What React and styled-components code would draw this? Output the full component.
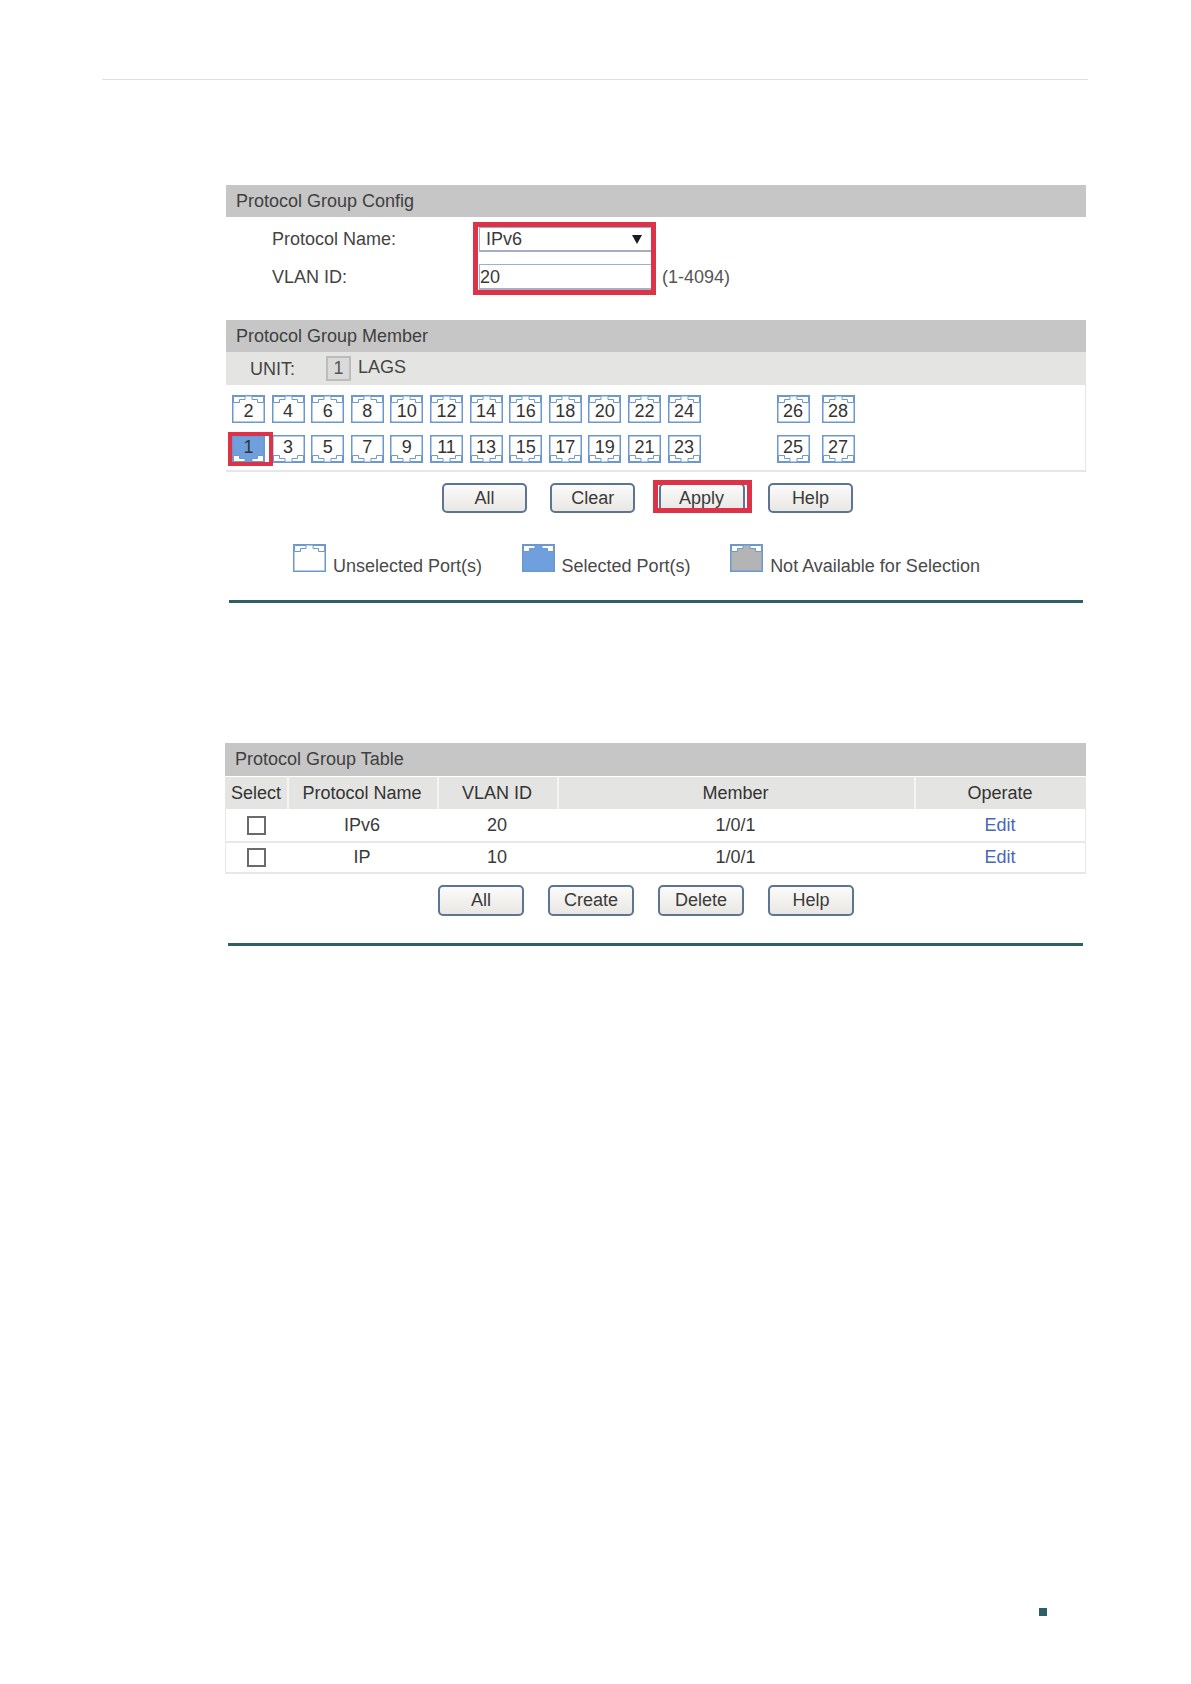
import React from "react";
import styled, { createGlobalStyle } from "styled-components";

const Global = createGlobalStyle`
  body {
    margin: 0;
    background: #fff;
    font-family: "Liberation Sans", Arial, sans-serif;
    font-size: 18px;
    color: #3a3a3a;
  }
`;

const Page = styled.div`
  width: 1191px;
  height: 1684px;
  display: flex;
  flex-direction: column;
  overflow: hidden;
`;

const TopRule = styled.div`
  height: 1px;
  margin: 79px 103px 0 102px;
  background: #e0e0e0;
`;

const Sheet = styled.div`
  width: 860px;
  margin: 105px 0 0 226px;
`;

const TableSheet = styled.div`
  width: 861px;
  margin: 140px 0 0 225px;
`;

const PanelTitle = styled.div`
  height: ${(p) => p.$h || 32}px;
  line-height: 33px;
  padding-left: 10px;
  background: #c6c6c6;
  color: #3f3f3f;
`;

const ConfigForm = styled.div`
  position: relative;
  display: grid;
  grid-template-columns: 253px 173px auto;
  grid-auto-rows: min-content;
  row-gap: 12px;
  align-items: center;
  padding: 10px 0 30px;
`;

const FieldLabel = styled.label`
  padding-left: 46px;
  color: #444;
`;

const SelectBox = styled.div`
  box-sizing: border-box;
  height: 25px;
  display: flex;
  align-items: center;
  justify-content: space-between;
  padding: 0 9px 0 6px;
  border: 1px solid #9db0ca;
  border-bottom: 2px solid #a4b0c0;
  color: #3a3a3a;
`;

const Arrow = styled.span`
  width: 0;
  height: 0;
  border-left: 5px solid transparent;
  border-right: 5px solid transparent;
  border-top: 9px solid #1c1c1c;
`;

const TextInput = styled.input`
  box-sizing: border-box;
  width: 173px;
  height: 26px;
  padding: 1px 0 0;
  border: 1px solid #9db0ca;
  border-bottom: 2px solid #a4b0c0;
  font: inherit;
  color: #3a3a3a;
  outline: none;
`;

const Hint = styled.span`
  padding-left: 10px;
  color: #555;
`;

const RedFrame = styled.div`
  position: absolute;
  box-sizing: border-box;
  border: ${(p) => p.$w || 5}px solid #dc3349;
  left: ${(p) => p.$x}px;
  top: ${(p) => p.$y}px;
  width: ${(p) => p.$width}px;
  height: ${(p) => p.$height}px;
  pointer-events: none;
`;

const UnitBar = styled.div`
  height: 33px;
  display: flex;
  align-items: center;
  background: #e4e4e2;
  color: #444;
`;

const UnitLabel = styled.span`
  width: 100px;
  padding: 1px 0 0 24px;
  box-sizing: border-box;
`;

const UnitTab = styled.span`
  box-sizing: border-box;
  width: 25px;
  height: 25px;
  margin-bottom: 1px;
  display: flex;
  align-items: center;
  justify-content: center;
  background: #dadada;
  border: 2px solid #bcbcbc;
  color: #555;
`;

const LagsLabel = styled.span`
  margin: 0 0 3px 7px;
`;

const PortArea = styled.div`
  position: relative;
  box-sizing: border-box;
  height: 87px;
  padding: 10px 0 0 6px;
  display: flex;
  flex-direction: column;
  gap: 12px;
  border-right: 1px solid #e6e6e6;
  border-bottom: 2px solid #e6e6e6;
`;

const PortRow = styled.div`
  display: flex;
`;

const PortGroup = styled.div`
  display: flex;
  gap: ${(p) => p.$gap}px;
  margin-left: ${(p) => p.$offset || 0}px;
`;

const PortBox = styled.div`
  position: relative;
  width: 33px;
  height: 28px;
  display: flex;
  justify-content: center;
  align-items: ${(p) => (p.$odd ? "flex-start" : "flex-end")};
  line-height: 21px;
  color: #333;
`;

const PortNum = styled.span`
  position: relative;
  top: ${(p) => (p.$odd ? "2px" : "-1px")};
`;

const PortSvg = styled.svg`
  position: absolute;
  inset: 0;
  transform: ${(p) => (p.$flip ? "scaleY(-1)" : "none")};
`;

const ButtonRow = styled.div`
  position: relative;
  display: flex;
  gap: ${(p) => p.$gap}px;
  margin: ${(p) => p.$top}px 0 0 ${(p) => p.$left}px;
`;

const Btn = styled.button`
  box-sizing: border-box;
  width: ${(p) => p.$w}px;
  height: ${(p) => p.$h}px;
  padding: 0;
  border: 2px solid #5d7590;
  border-radius: 5px;
  background: linear-gradient(to bottom, #fbfbfb, #e9e7e3);
  font: inherit;
  color: #3a3a3a;
`;

const Legend = styled.div`
  display: flex;
  margin: 31px 0 0 67px;
`;

const LegendItem = styled.div`
  display: flex;
  align-items: flex-end;
  margin-right: 39.5px;
  color: #4a4a4a;
`;

const LegendText = styled.span`
  margin-left: 7px;
  line-height: 20px;
  position: relative;
  top: 4px;
`;

const TealRule = styled.div`
  height: 3px;
  margin: ${(p) => p.$top}px 3px 0 3px;
  background: #2f5f66;
`;

const GridRow = styled.div`
  display: grid;
  grid-template-columns: 62px 150px 120px 357px 172px;
  height: ${(p) => p.$h}px;
  align-items: center;
  text-align: center;
  box-sizing: border-box;
  border-bottom: 2px solid #e8e8e8;
  box-shadow: inset 1px 0 #e8e8e8, inset -1px 0 #e8e8e8;
`;

const HeadRow = styled.div`
  display: grid;
  grid-template-columns: 62px 150px 120px 357px 172px;
  height: 32px;
  margin-top: 1px;
`;

const HeadCell = styled.div`
  display: flex;
  align-items: center;
  justify-content: center;
  background: #e4e4e2;
  box-shadow: ${(p) => (p.$first ? "none" : "inset 2px 0 #f4f4f4")};
  color: #333;
`;

const Check = styled.span`
  justify-self: center;
  width: 19px;
  height: 19px;
  box-sizing: border-box;
  border: 2px solid #6a6a6a;
  background: #fff;
`;

const EditLink = styled.a`
  color: #4a66b8;
`;

const FooterMark = styled.div`
  width: 8px;
  height: 8px;
  margin: auto 0 68px 1039px;
  background: #2f5f66;
`;

// small RJ45 style port drawing, notches on top
const PortShape = ({ fill = "#fff", flip }) => (
  <PortSvg $flip={flip} width="33" height="28" viewBox="0 0 33 28">
    <rect x="0.75" y="0.75" width="31.5" height="26.5" fill={fill} stroke="#6d97cf" strokeWidth="1.5" />
    <path d="M1.5 7.5 H7.5 V4.5 H13 V1.5 H1.5 Z" fill="#fff" stroke="#6d97cf" strokeWidth="1" />
    <path d="M31.5 7.5 H25.5 V4.5 H20 V1.5 H31.5 Z" fill="#fff" stroke="#6d97cf" strokeWidth="1" />
  </PortSvg>
);

const Port = ({ n, fill }) => {
  const odd = n % 2 === 1;
  return (
    <PortBox $odd={odd}>
      <PortShape fill={fill} flip={odd} />
      <PortNum $odd={odd}>{n}</PortNum>
    </PortBox>
  );
};

const evens = [2, 4, 6, 8, 10, 12, 14, 16, 18, 20, 22, 24];
const odds = [1, 3, 5, 7, 9, 11, 13, 15, 17, 19, 21, 23];

const rows = [
  { name: "IPv6", vlan: "20", h: 34 },
  { name: "IP", vlan: "10", h: 31 },
];

export default function App() {
  return (
    <Page>
      <Global />
      <TopRule />

      <Sheet>
        <PanelTitle>Protocol Group Config</PanelTitle>
        <ConfigForm>
          <FieldLabel>Protocol Name:</FieldLabel>
          <SelectBox>
            IPv6
            <Arrow />
          </SelectBox>
          <span />
          <FieldLabel>VLAN ID:</FieldLabel>
          <TextInput defaultValue="20" readOnly />
          <Hint>(1-4094)</Hint>
          <RedFrame $x={247} $y={5} $width={183} $height={73} />
        </ConfigForm>

        <PanelTitle>Protocol Group Member</PanelTitle>
        <UnitBar>
          <UnitLabel>UNIT:</UnitLabel>
          <UnitTab>1</UnitTab>
          <LagsLabel>LAGS</LagsLabel>
        </UnitBar>
        <PortArea>
          <PortRow>
            <PortGroup $gap={6.6}>
              {evens.map((n) => (
                <Port key={n} n={n} />
              ))}
            </PortGroup>
            <PortGroup $gap={12} $offset={76}>
              <Port n={26} />
              <Port n={28} />
            </PortGroup>
          </PortRow>
          <PortRow>
            <PortGroup $gap={6.6}>
              {odds.map((n) => (
                <Port key={n} n={n} fill={n === 1 ? "#6f9fdc" : undefined} />
              ))}
            </PortGroup>
            <PortGroup $gap={12} $offset={76}>
              <Port n={25} />
              <Port n={27} />
            </PortGroup>
          </PortRow>
          <RedFrame $w={4} $x={2} $y={47} $width={45} $height={34} />
        </PortArea>

        <ButtonRow $gap={23.3} $top={11} $left={216}>
          <Btn $w={85} $h={30}>All</Btn>
          <Btn $w={85} $h={30}>Clear</Btn>
          <Btn $w={86} $h={30}>Apply</Btn>
          <Btn $w={85} $h={30}>Help</Btn>
          <RedFrame $x={211} $y={-3} $width={99} $height={33} />
        </ButtonRow>

        <Legend>
          <LegendItem>
            <PortBox>
              <PortShape />
            </PortBox>
            <LegendText>Unselected Port(s)</LegendText>
          </LegendItem>
          <LegendItem>
            <PortBox>
              <PortShape fill="#6f9fdc" />
            </PortBox>
            <LegendText>Selected Port(s)</LegendText>
          </LegendItem>
          <LegendItem>
            <PortBox>
              <PortShape fill="#b4b4b4" />
            </PortBox>
            <LegendText>Not Available for Selection</LegendText>
          </LegendItem>
        </Legend>
        <TealRule $top={28} />
      </Sheet>

      <TableSheet>
        <PanelTitle $h={33}>Protocol Group Table</PanelTitle>
        <HeadRow>
          <HeadCell $first>Select</HeadCell>
          <HeadCell>Protocol Name</HeadCell>
          <HeadCell>VLAN ID</HeadCell>
          <HeadCell>Member</HeadCell>
          <HeadCell>Operate</HeadCell>
        </HeadRow>
        {rows.map((r) => (
          <GridRow key={r.name} $h={r.h}>
            <Check />
            <span>{r.name}</span>
            <span>{r.vlan}</span>
            <span>1/0/1</span>
            <EditLink>Edit</EditLink>
          </GridRow>
        ))}
        <ButtonRow $gap={24} $top={11} $left={213}>
          <Btn $w={86} $h={31}>All</Btn>
          <Btn $w={86} $h={31}>Create</Btn>
          <Btn $w={86} $h={31}>Delete</Btn>
          <Btn $w={86} $h={31}>Help</Btn>
        </ButtonRow>
        <TealRule $top={27} />
      </TableSheet>

      <FooterMark />
    </Page>
  );
}
